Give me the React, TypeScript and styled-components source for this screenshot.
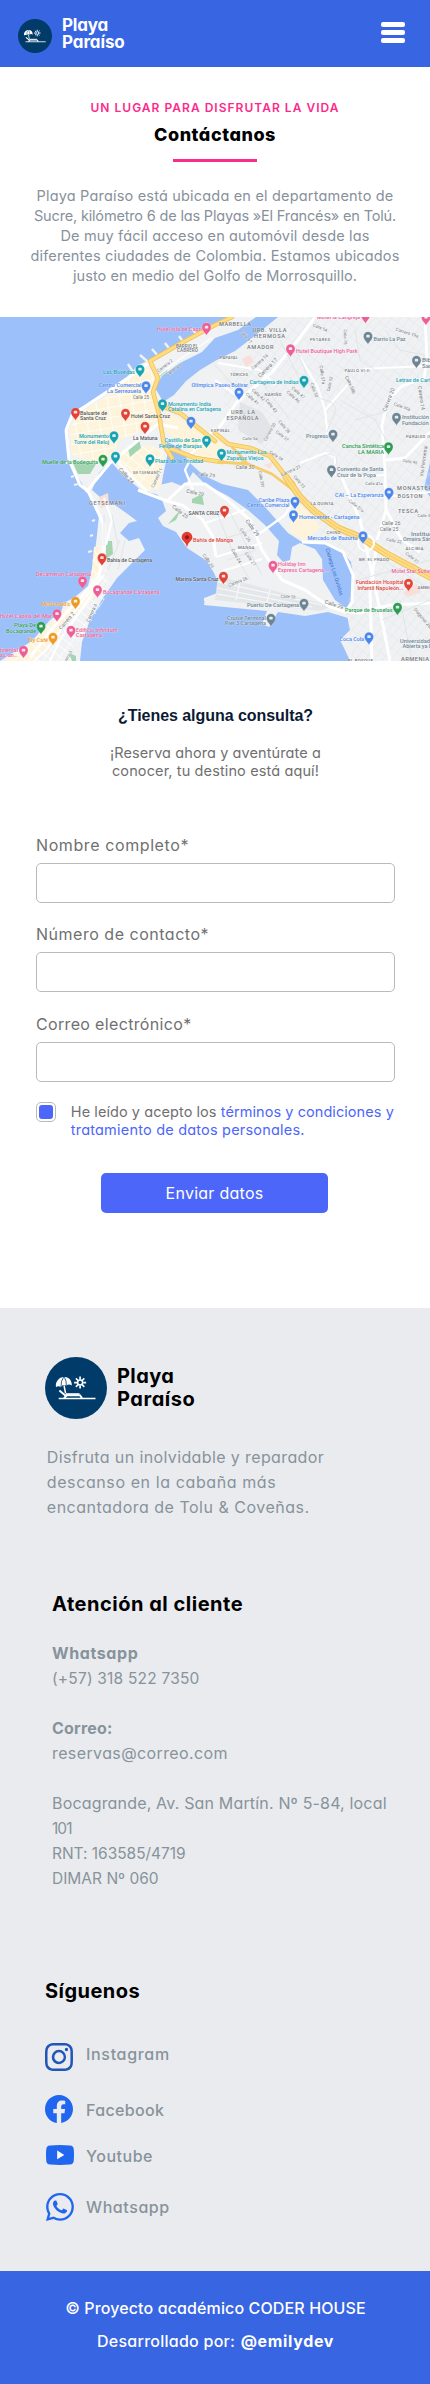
import React from "react";
import styled, { createGlobalStyle } from "styled-components";
import { BsFacebook, BsInstagram, BsWhatsapp } from "react-icons/bs";

const GlobalStyle = createGlobalStyle`
  * { box-sizing: border-box; }
  body {
    margin: 0;
    background: #fff;
    font-family: Inter, "Open Sans", sans-serif;
    font-feature-settings: "cv11";
  }
  h1, h2, h3, p, address { margin: 0; font-style: normal; }
`;

const Page = styled.div`
  width: 430px;
  height: 2384px;
  display: flex;
  flex-direction: column;
  overflow: hidden;
`;

/* One line of copy with its own tracking */
const Line = styled.span<{ $ls?: number; $w?: number; $size?: number }>`
  display: block;
  white-space: nowrap;
  letter-spacing: ${(p) => p.$ls ?? 0}px;
  ${(p) => (p.$w ? `font-weight: ${p.$w};` : "")}
  ${(p) => (p.$size ? `font-size: ${p.$size}px;` : "")}
`;

/* ---------- Header ---------- */
const Header = styled.header`
  height: 67px;
  background: #3865e2;
  display: flex;
  justify-content: space-between;
  align-items: flex-start;
  padding: 0 25px 0 18px;
`;
const HeaderBrand = styled.div`
  display: flex;
  align-items: flex-start;
  gap: 10px;
  padding-top: 17px;
  svg { margin-top: 2px; }
`;
const HeaderName = styled.div`
  color: #fff;
  font-size: 17px;
  line-height: 17px;
  font-weight: 700;
`;
const Burger = styled.button`
  margin: 22px 0 0;
  padding: 0;
  border: 0;
  background: none;
  width: 24px;
  display: flex;
  flex-direction: column;
  gap: 3px;
`;
const BurgerBar = styled.i`
  height: 5px;
  width: 24px;
  border-radius: 2px;
  background: #fff;
`;

/* ---------- Intro ---------- */
const Intro = styled.section`
  height: 250px;
  padding-top: 33px;
  display: flex;
  flex-direction: column;
  align-items: center;
  text-align: center;
`;
const Kicker = styled.div`
  color: #fc2a8b;
  font-size: 12px;
  line-height: 16px;
  font-weight: 600;
`;
const Title = styled.h1`
  margin-top: 6.5px;
  color: #000;
  font-size: 18px;
  line-height: 24px;
  font-weight: 800;
`;
const Rule = styled.div`
  width: 83.5px;
  height: 3px;
  margin-top: 12.5px;
  background: #fc2a8b;
`;
const IntroText = styled.p`
  margin-top: 24px;
  color: #87919b;
  font-size: 14.5px;
  line-height: 20px;
`;

const MapFrame = styled.section`
  height: 344px;
  svg { display: block; }
  text { font-family: Roboto, sans-serif; }
`;

/* ---------- Form ---------- */
const FormSection = styled.section`
  height: 647px;
  padding: 45px 35px 0 36px;
  display: flex;
  flex-direction: column;
`;
const FormTitle = styled.h2`
  text-align: center;
  color: #0b1a33;
  font-family: "Liberation Sans", Arial, sans-serif;
  font-size: 16px;
  line-height: 20px;
  font-weight: 700;
`;
const FormLead = styled.p`
  margin-top: 18px;
  text-align: center;
  color: #707070;
  font-size: 14.5px;
  line-height: 18px;
`;
const Form = styled.form`
  margin-top: 55px;
  display: flex;
  flex-direction: column;
  gap: 21.4px;
`;
const Field = styled.label`
  display: block;
  height: 68px;
  color: #707070;
  font-size: 16px;
  line-height: 20px;
`;
const Input = styled.input`
  display: block;
  width: 359px;
  height: 40px;
  margin-top: 8px;
  border: 1px solid #bababa;
  border-radius: 5px;
  background: #fff;
  outline: none;
`;
const Terms = styled.div`
  margin-top: -1.2px;
  display: flex;
  gap: 14.8px;
  color: #707070;
  font-size: 14.5px;
  line-height: 18px;
`;
const CheckBox = styled.div`
  width: 20px;
  height: 20px;
  border: 1px solid #bababa;
  border-radius: 5px;
  padding: 2px;
`;
const CheckFill = styled.div`
  width: 14px;
  height: 14px;
  border-radius: 3px;
  background: #4d66fa;
`;
const TermsText = styled.div`
  padding-top: 1px;
`;
const Link = styled.a`
  color: #4d66fa;
`;
const Submit = styled.button`
  align-self: flex-start;
  margin: 12.6px 0 0 65px;
  width: 227px;
  height: 40px;
  border: 0;
  border-radius: 5px;
  background: #4d66fa;
  color: #fff;
  font: 400 16px/20px Inter, sans-serif;
  font-feature-settings: "cv11";
`;

/* ---------- Footer ---------- */
const Footer = styled.footer`
  height: 963px;
  background: #eaebef;
  padding: 49px 0 0 45px;
  color: #87939b;
  font-size: 16px;
  line-height: 25px;
`;
const FooterBrand = styled.div`
  display: flex;
  align-items: center;
  gap: 10px;
  color: #000;
  font-size: 20px;
  line-height: 23px;
  font-weight: 700;
`;
const FooterText = styled.p`
  margin: 25.7px 0 0 1.8px;
`;
const FooterTitle = styled.h3<{ $top: number; $left?: number }>`
  margin: ${(p) => p.$top}px 0 0 ${(p) => p.$left ?? 0}px;
  color: #000;
  font-size: 20px;
  line-height: 24px;
  font-weight: 700;
`;
const Contact = styled.address`
  margin: 25px 0 0 7px;
`;
const ContactGroup = styled.div`
  & + & { margin-top: 25px; }
`;
const Socials = styled.div`
  margin-top: 40px;
`;
const Social = styled.div<{ $height: number; $textTop: number; $indent?: number }>`
  height: ${(p) => p.$height}px;
  display: grid;
  grid-template-columns: 41px 1fr;
  align-items: start;
  font-weight: 500;
  line-height: 20px;
  svg { display: block; margin-left: ${(p) => p.$indent ?? 0}px; }
  span { margin-top: ${(p) => p.$textTop}px; }
`;
const Credits = styled.div`
  height: 113px;
  background: #3865e2;
  padding: 27px 0 0 1px;
  color: #fff;
  font-size: 16px;
  line-height: 20px;
  font-weight: 500;
  display: flex;
  flex-direction: column;
  align-items: center;
  gap: 13px;
`;
const CreditRow = styled.div`
  display: flex;
  gap: 5.5px;
`;

function Logo({ size }: { size: number }) {
  return (
    <svg width={size} height={size} viewBox="0 0 62 62" fill="none">
      <circle cx="31" cy="31" r="31" fill="#003b69" />
      <path d="M11 30C10 25 14 20 19 20C24 19.6 27 23.5 26.8 28.5C24.8 27 23 27 21.4 28.6C19.6 27.4 17.4 27.8 16 29.7C14.2 28.8 12.3 29 11 30Z" fill="#fff" />
      <path d="M18.6 20.2Q15.8 24 16 29.4M19.4 20.2Q21.6 24 21.4 28.4" stroke="#003b69" strokeWidth=".8" />
      <path d="M19 28.4L20.6 36.4M13.7 41.5H50.5" stroke="#fff" strokeWidth="1.5" />
      <path d="M14.4 33.6L20 38.2H35L37 41.3M21.5 38.5L19 41.3" stroke="#fff" strokeWidth="2" strokeLinejoin="round" />
      <path d="M21 37H34.5" stroke="#fff" strokeWidth="1.6" />
      <circle cx="35.1" cy="25.6" r="2.5" stroke="#fff" strokeWidth="1.5" />
      <path d="M35.1 19.6V22.6M35.1 28.6V31.6M29.1 25.6H32M38.2 25.6H41.1M30.9 21.4L33 23.5M37.2 27.7L39.3 29.8M39.3 21.4L37.2 23.5M33 27.7L30.9 29.8" stroke="#fff" strokeWidth="1.7" />
    </svg>
  );
}

function YoutubeIcon() {
  return (
    <svg width="28" height="20" viewBox="0 0 28 20">
      <path d="M4 .5Q14-.3 24 .5Q27.4.8 27.7 4Q28.3 10 27.7 16Q27.4 19.2 24 19.5Q14 20.3 4 19.5Q.6 19.2.3 16Q-.3 10 .3 4Q.6.8 4 .5Z" fill="#2166ee" />
      <path d="M11.2 5.6V14.2L18.3 9.9Z" fill="#fff" />
    </svg>
  );
}

/* ---------- Map ---------- */
const TEAL = "#17a3b3";
const PINK = "#ee5d96";
const RED = "#e24336";
const BLUE = "#4a86ee";
const GREEN = "#2b9c50";
const SLATE = "#6d8593";
const ORANGE = "#ef9a22";
const DARK = "#55585d";

/* colour, x, y of the pin head */
const pins: [string, number, number][] = [
  [PINK, 206.5, 328], [TEAL, 140, 370], [BLUE, 146, 386.5], [TEAL, 162.5, 404.5], [RED, 75.5, 413],
  [RED, 125.5, 414], [RED, 145, 427], [TEAL, 114, 436.5], [BLUE, 191, 422], [TEAL, 206.5, 441],
  [GREEN, 103, 460], [TEAL, 115.5, 457], [TEAL, 150, 459.5], [PINK, 365.5, 316], [PINK, 426, 318],
  [SLATE, 368, 337], [PINK, 290.5, 349.5], [SLATE, 416.5, 361], [TEAL, 304, 381], [BLUE, 239, 393],
  [SLATE, 396.5, 418], [SLATE, 333, 435], [GREEN, 388.5, 447.5], [TEAL, 221.5, 454], [SLATE, 331.5, 470.5],
  [RED, 102, 558.5], [PINK, 82.5, 581.5], [PINK, 97.5, 590.5], [ORANGE, 75.5, 602], [PINK, 57, 614.5],
  [GREEN, 41, 627], [PINK, 71, 631], [ORANGE, 53, 638], [PINK, 23.5, 651], [BLUE, 389, 493],
  [BLUE, 295, 502], [BLUE, 293.5, 515.5], [RED, 224.5, 511], [BLUE, 363, 536.5], [PINK, 273, 566],
  [RED, 223.5, 577], [RED, 408.5, 584], [SLATE, 304, 604], [GREEN, 397.5, 608], [SLATE, 271, 619],
  [BLUE, 369, 637.5],
];

/* text, x, baseline, width, colour */
const places: [string, number, number, number, string][] = [
  ["Hotel Isla de Capri", 157, 331, 45, PINK], ["Las Bóvedas", 103, 373.5, 32, TEAL],
  ["Centro Comercial", 98.5, 387, 43, BLUE], ["La Serrezuela", 107, 392.5, 34, BLUE],
  ["Monumento India", 168, 405.5, 43, TEAL], ["Catalina en Cartagena", 168, 411, 53, TEAL],
  ["Olímpica", 191.5, 386.5, 22, BLUE],
  ["Baluarte de", 80, 414.5, 27, DARK], ["Santa Cruz", 80, 420, 26, DARK],
  ["Hotel Santa Cruz", 131, 418, 39, DARK], ["La Matuna", 133, 439.5, 24.5, DARK],
  ["Monumento", 79, 438, 30, TEAL], ["Torre del Reloj", 74, 443.5, 35, TEAL],
  ["Castillo de San", 164.5, 442, 36, TEAL], ["Felipe de Barajas", 159, 448, 43, TEAL],
  ["Muelle de la Bodeguita", 42, 463.5, 56, GREEN], ["Plaza de la Trinidad", 155, 462.5, 48, TEAL],
  ["Motel la Cangreja", 317, 319, 43, PINK], ["Barrio La Paz", 373.5, 340.5, 32, SLATE],
  ["Hotel Boutique High Park", 296, 352.5, 61.5, PINK], ["Biblioteca", 422, 362, 28, SLATE], ["Santa Rita", 422, 367.5, 28, SLATE],
  ["Cartagena de Indias", 249.5, 384, 49, TEAL], ["Paseo Bolívar", 215, 386.5, 33, BLUE],
  ["Letras de Cartagena", 396, 382, 50, TEAL], ["Institución Edu", 402, 419, 38, SLATE], ["Fundación Ped", 402, 424.5, 38, SLATE],
  ["Progreso", 306, 438, 22.5, SLATE], ["Cancha Sintética", 342, 448, 42, GREEN], ["LA MARIA", 358, 453.5, 26, GREEN],
  ["Monumento Los", 226.5, 454, 40, TEAL], ["Zapatos Viejos", 226.5, 459.5, 37, TEAL],
  ["Convento de Santa", 337, 471, 46.5, SLATE], ["Cruz de la Popa", 337, 476.5, 39, SLATE],
  ["Bahía de Manga", 193, 541.5, 40, RED], ["Marina Santa Cruz", 175.5, 580.5, 43, DARK], ["SANTA CRUZ", 188.5, 514.5, 31, DARK],
  ["Bahía de Cartagena", 107, 562, 45, DARK], ["Decameron Cartagena", 36, 576, 55, PINK],
  ["Bocagrande Cartagena", 103, 593.5, 56.5, PINK], ["McDonald's", 41.5, 605.5, 28.5, ORANGE],
  ["Hotel Capilla del Mar", 0, 617.5, 52, PINK], ["Playa De", 14, 627, 22, GREEN], ["Bocagrande", 6, 632.5, 30, GREEN],
  ["Ely Café", 28, 641.5, 20, ORANGE], ["Edificio Infinitum", 76, 631.5, 41.5, PINK], ["Cartagena", 76, 637, 26, PINK],
  ["tinental", 0, 651.5, 18, PINK], ["as, an...", 0, 657, 18, PINK],
  ["CAI – La Esperanza", 335, 496.5, 48.5, BLUE], ["Caribe Plaza", 258.5, 501.5, 31, BLUE], ["Centro Comercial", 247, 507, 42.5, BLUE],
  ["Homecenter - Cartagena", 299, 518.5, 60.5, BLUE], ["Mercado de Bazurto", 307.5, 540, 50, BLUE],
  ["Institución", 411, 536, 30, SLATE], ["Omaira Sánchez", 403, 541, 40, SLATE],
  ["Holiday Inn", 278, 566, 27.5, PINK], ["Express Cartagena...", 278, 571.5, 50.5, PINK],
  ["Motel Star Suites", 391.5, 572.5, 41, PINK], ["Fundación Hospital", 356, 584, 47.5, RED], ["Infantil Napoleón...", 357.5, 589.5, 46, RED],
  ["Puerto De Cartagena", 247, 606.5, 52, SLATE], ["Parque de Bruselas", 345, 611.5, 47.5, GREEN],
  ["Cruise Terminal", 227, 619.5, 39, SLATE], ["Pier 3 Cartagena", 225, 625, 41, SLATE],
  ["Coca Cola", 339.5, 640.5, 24.5, BLUE], ["Universidad", 400, 642.5, 30, SLATE], ["Abierta ya Dist", 402.5, 648, 36, SLATE],
];

/* text, x, baseline, width, size */
const districts: [string, number, number, number, number][] = [
  ["BARRIO EL", 176, 347.5, 22, 4.6], ["CABRERO", 177, 352, 21, 4.6], ["MARBELLA", 219, 326, 32, 5.6],
  ["URB. VILLA", 252.5, 332, 34, 5.6], ["HERMOSA", 254, 338, 31, 5.6], ["AMADOR", 247, 348.5, 26.5, 5.6],
  ["PAPAYAL", 220, 359, 18, 4.2], ["TORICES", 230, 375.5, 18, 4.2], ["PETARES", 310, 340.5, 20, 4.2],
  ["PAULO VI-II", 344.5, 371.5, 25, 4.4], ["NARIÑO", 264.5, 396, 17, 4.2], ["URB. LA", 231, 414, 24, 5.6],
  ["ESPAÑOLA", 226.5, 420, 32, 5.6], ["ESPINAL", 211, 431.5, 19, 4.4], ["PARAISO II", 406, 438, 24, 4.2],
  ["GETSEMANÍ", 133, 474, 25, 4], ["GETSEMANI", 89, 505, 36, 5.6], ["MONASTERIO", 397, 489.5, 42, 5.6],
  ["BOSTON", 397.5, 497.5, 25, 5.6], ["TESCA", 398, 513, 20, 5.6], ["LA QUINTA", 310.5, 505, 23, 4.4],
  ["CHINO", 326.5, 533.5, 14, 4.2], ["MANGA", 238, 549, 16.5, 4.4], ["ALCIBIA", 405.5, 550, 18, 4.4],
  ["BR. EL PRADO", 359, 561, 30, 4.4], ["AMBERES", 417.5, 589, 20, 4.2], ["ARMENIA", 401, 661, 28, 5.8],
  ["EL BOSQUE", 348, 662.5, 25, 4.6],
];

/* text, centre x, centre y, angle, size */
const streets: [string, number, number, number, number][] = [
  ["Carrera 2", 165, 366, -38, 4.5], ["Carrera 3", 174, 370, -35, 4.5], ["Calle 25", 141, 397.5, 0, 4.5],
  ["Calle 24", 126, 476, 48, 5.5], ["Carrera 11", 157, 478, -65, 4.5], ["Calle 29", 206, 475, 8, 5],
  ["Calle 67", 246, 337, 50, 4.2], ["Carrera 16", 260, 362, -42, 4.6], ["Carrera 17", 268, 368, -45, 5.4],
  ["Calle 54", 320, 328, 22, 4.2], ["Calle 78", 345, 337, 88, 4.2], ["Carrera 19a", 407, 333, 18, 4.6],
  ["Calle 51a", 322, 375, 82, 4.6], ["Calle 52", 330, 384, -78, 4.2], ["Calle 50", 314, 390, 70, 4.2],
  ["Calle 58b", 350, 385, 65, 4.6], ["Calle 47", 298, 393, 42, 4.4], ["Calle 46", 293, 397, 42, 4.4],
  ["Calle 42", 258, 395, 42, 4.4], ["Calle 41", 252, 399, 42, 4.4], ["Calle 43", 271, 406, 52, 4.4],
  ["Carrera 20", 389, 400, -68, 5.4], ["Carrera 14", 421, 398, 82, 5.2], ["Calle 50a", 402, 407, 20, 4.2],
  ["Carrera 20", 270, 432, -60, 4.4], ["Calle 38", 284, 427, 50, 4.4], ["Calle 37", 282, 436, 38, 4.2],
  ["Calle 3a", 250, 439, 0, 4.2], ["Calle 34", 276, 456, 32, 4.2], ["Calle 30", 245, 468, 0, 5.2],
  ["Carrera 21", 291, 471, -25, 4.6], ["Calle 33", 299, 482, 50, 4.2], ["Calle 29f", 261, 479, 80, 4.2],
  ["Calle 45", 410, 462, 10, 4.2], ["Calle 41a", 374, 484, 0, 4.2], ["Via Perimetral", 424, 461, -82, 5],
  ["Calle 29", 195, 493, 12, 5], ["Calle 25", 180, 512, 38, 5.2], ["Calle 24", 208, 561, 55, 4.6],
  ["Carrera 2", 67, 621, -50, 5.2], ["Carrera 4", 92, 613, -65, 4.8], ["Carrera 3", 67, 659, -60, 4.4],
  ["Calle 29", 252, 528, 55, 5.4], ["Calle 26", 245, 535, 55, 4.4], ["Calle 27", 250, 559, 55, 4.4],
  ["Calle 24", 236, 556, 60, 4.4], ["Carrera 26", 238, 582, -22, 4.4], ["Calle 28", 288, 597, 3, 4.2],
  ["Calle 29", 334, 605, 18, 5.4], ["Calle 27a", 356, 506, 38, 4.4], ["Calle 26", 391, 524, 0, 5.2],
  ["Calle 25", 389, 530, 0, 5.2], ["Calle 22", 394, 541, 10, 4.4], ["Calle 21", 412, 558, 38, 4.4],
  ["Calle 31", 425, 516, 0, 4.2], ["Diagonal 26a", 423, 619, 50, 4.6],
];

const MAINLAND =
  "M430 317H278L252 338L235 351L215 361L200 370L186 381L174 395L163 402L163 440L180 448L190 463L203 475L222 484L248 490L265 507L288 533L302 542L325 543L340 549L351 562L354 580L352 600L346 610L348 620L350 630L340 640L345 650L350 661H430V497L424 488L430 463Z";
const OLD_TOWN =
  "M240 317H228L187 339L150 360L138 365L128 376L100 396L72 413L65 429L67 450L75 473L88 493L99 515L97 535L94 560L88 586L75 597L64 603L61 612L50 620L32 641L16 651L0 661H80L82 642L90 620L103 598L117 578L133 562L145 550L139 538L129 541L120 533L129 523L137 521L129 515L115 505L100 497L92 490L99 473L113 458L119 452L112 463L122 474L142 491L160 495L163 476L168 452L165 432L178 425L166 421L161 398L155 388L162 376L180 363L202 352L215 338L238 330L256 317Z";
const MANGA =
  "M138 490L154 491L162 500L166 511L158 518L163 526L176 532L187 548L207 561L214 573L218 582L217 593L205 598L204 605L267 611L262 624L269 627L278 612L305 616L328 612L348 618L346 608L335 600L323 580L322 559L315 549L300 543L292 547L290 560L283 562L277 555L279 541L265 525L248 510L228 496L205 484L193 472L184 487L172 482Z";

function Pin({ color, x, y }: { color: string; x: number; y: number }) {
  return (
    <g transform={`translate(${x} ${y})`}>
      <path d="M0 7.6C-.8 4.7-4.5 3.2-4.5-.8A4.5 4.5 0 0 1 4.5-.8C4.5 3.2 .8 4.7 0 7.6Z" fill={color} stroke="#fff" strokeOpacity=".45" strokeWidth=".4" />
      <rect x="-1.7" y="-2.2" width="3.4" height="2.8" rx=".7" fill="#fff" opacity=".85" />
    </g>
  );
}

function CityMap() {
  return (
    <svg width="430" height="344" viewBox="0 317 430 344">
      <defs>
        <pattern id="blocksA" width="11" height="8" patternUnits="userSpaceOnUse" patternTransform="rotate(38)">
          <path d="M0 0H11M0 0V8" stroke="#fff" strokeWidth="1.3" fill="none" />
        </pattern>
        <pattern id="blocksB" width="10" height="7" patternUnits="userSpaceOnUse" patternTransform="rotate(-52)">
          <path d="M0 0H10M0 0V7" stroke="#e2e5e9" strokeWidth=".8" fill="none" />
        </pattern>
        <pattern id="blocksC" width="12" height="10" patternUnits="userSpaceOnUse" patternTransform="rotate(-10)">
          <path d="M0 0H12M0 0V10" stroke="#fff" strokeWidth="1.6" fill="none" />
        </pattern>
      </defs>
      <rect y="317" width="430" height="344" fill="#9cc0f9" />
      <path d={MAINLAND} fill="#eff1f3" />
      <path d={MANGA} fill="#eff1f3" />
      <path d={OLD_TOWN} fill="#f1f2f4" />
      <path d="M204 598L217 594V601H204Z" fill="#eff1f3" />

      <path d="M290 317H430V430L345 475L300 470L225 430L222 380Z" fill="url(#blocksB)" />
      <path d="M300 480L345 480L430 440V661H352L346 610L354 580L340 549L300 520Z" fill="url(#blocksB)" />
      <path d="M240 402L262 412L272 428L262 444L238 430Z" fill="#e2e4e7" />
      <path d="M218 576L332 606L320 611L215 600Z" fill="#e4e7ea" />
      <path d="M218 582L322 605M217 588L312 607M217 594L300 608M240 582L236 600M270 590L266 606" stroke="#f6f7f8" strokeWidth="1.2" />

      <g fill="#fdf4db">
        <path d="M128 377L148 366L155 378L151 390L158 412L160 425L145 430L120 440L112 455L97 462L72 455L70 428L77 414L104 398Z" />
        <path d="M118 453L150 445L163 452L160 488L146 491L117 465Z" />
        <path d="M166 412L200 428L215 445V462L195 455L166 432Z" />
        <path d="M94 547L101 545L103 570L96 577L103 590L80 610L58 634L34 661H4L26 647L62 612L76 598L90 590Z" />
        <path d="M291 511L300 503L321 527L305 541L290 532Z" />
        <path d="M215 428L225 450L217 462L213 450Z" />
      </g>
      <path d="M128 377L148 366L155 378L151 390L158 412L160 425L145 430L120 440L112 455L97 462L72 455L70 428L77 414L104 398Z" fill="url(#blocksC)" />
      <path d="M118 453L150 445L163 452L160 488L146 491L117 465Z" fill="url(#blocksA)" />
      <path d="M94 547L103 545L110 590L80 640L62 661H4L26 647L62 612L90 590Z" fill="url(#blocksA)" />

      <g fill="#a3d6b0">
        <path d="M72 461L96 464L90 474L78 474Z" />
        <path d="M128 449L139 439L141 448L130 457Z" />
        <path d="M106 541L112 541L113 554L106 559Z" />
        <path d="M168 524L181 509L176 520Z" />
        <path d="M192 499L202 494L204 505L192 503Z" />
        <path d="M69 653L76 656V661H72Z" />
        <path d="M157 374L168 368L167 372L160 377Z" opacity=".6" />
        <path d="M240 459L246 460L243 467Z" opacity=".6" />
      </g>
      <g fill="#f9ded9">
        <path d="M99 497L108 493L109 505L101 508Z" />
        <path d="M242 359L250 355L254 362L246 367Z" />
        <path d="M403 592L417 584L421 592L408 597Z" />
        <path d="M264 465L273 462L270 469Z" />
      </g>

      {/* breakwaters along the beach */}
      <path d="M140 355L148 362M152 349L159 357M165 343L171 351M179 336L184 343M192 329L198 336M206 323L211 330M128 364L133 372" stroke="#f1f2f4" strokeWidth="2.4" />
      <path d="M74 476L71 477M78 484L74 485M93 535L90 536M95 520L92 521M92 551L88 552M68 463L64 463" stroke="#f1f2f4" strokeWidth="2" />

      {/* minor roads */}
      <g stroke="#fff" fill="none" strokeWidth="2.2" strokeLinejoin="round">
        <path d="M66 430L69 460L80 485L88 491L97 510L104 525V548L99 576L82 596L55 625L30 657M150 362L128 378L72 415L66 430" strokeWidth="3" />
        <path d="M104 575L86 596L46 650L34 661M98 585L60 640L50 661M104 498L112 520L106 545" />
        <path d="M86 492L110 463L135 443L158 424L178 428M112 455L135 480L147 491M160 425L165 450" strokeWidth="3" />
        <path d="M315 317L298 340L272 372L237 402L219 428" strokeWidth="3" />
        <path d="M215 380L240 398M218 363L260 370L275 385M300 357L318 388L325 410L328 438M325 410L352 380M344 371L380 368L430 366" />
        <path d="M425 317L427 360L424 378L402 386L388 400L382 425L385 470L386 510L377 540M386 460L405 458L430 432" strokeWidth="2.8" />
        <path d="M300 463L325 453L335 457V475M345 477L386 475M350 495L386 497L430 492" />
        <path d="M342 478L360 520L369 560L380 610L390 661M376 550L370 590L372 661M386 510L402 540L420 552" strokeWidth="3" />
        <path d="M138 490L167 501L182 505L202 519L213 537L216 557M167 501L185 484L205 484L225 498L250 520L262 550L282 580L305 590L330 607L346 612" strokeWidth="3" />
        <path d="M190 455L207 437L215 428M193 490L185 470L190 460M205 523L245 510M216 557L262 543M222 571L262 559M259 534L285 515L294 500" />
        <path d="M302 542L325 543L343 552L353 575L352 602L346 611L360 613L390 605L430 603" strokeWidth="3" />
        <path d="M155 378L180 359L212 338" strokeWidth="1.2" />
      </g>
      <g stroke="#dfe3e7" strokeWidth=".9" fill="none">
        <path d="M295 350C310 370 305 395 325 400S330 420 327 432M355 330L360 360L378 372M260 380L290 420M340 400L375 420L386 440M318 462C325 448 345 456 333 468M280 340L300 380M215 365L236 388M385 330L400 350L424 355M355 420L385 412" />
        <path d="M104 515V545M112 515L118 545M120 540L108 570M125 540L118 570M384 560L430 590M382 620L430 600M400 600L412 661M358 580L430 560" />
        <path d="M228 508L246 545L262 575M218 515L232 550L250 580M220 540L252 530M228 560L256 550" />
      </g>

      {/* highways */}
      <g fill="none" strokeLinejoin="round" strokeLinecap="round">
        <path d="M232 317L215 325L185 341L150 361L158 378L153 392L159 414L164 445L172 458M159 405L180 413L215 441M164 446L195 458L222 462M215 433L228 444L250 448L270 456L284 474L293 484" stroke="#f5c04e" strokeWidth="4.6" />
        <path d="M232 317L215 325L185 341L150 361L158 378L153 392L159 414L164 445L172 458M159 405L180 413L215 441M164 446L195 458L222 462M215 433L228 444L250 448L270 456L284 474L293 484" stroke="#fddc86" strokeWidth="3" />
        <path d="M219 462L248 464L272 474L293 490M232 447L246 462" stroke="#f8cc66" strokeWidth="2.8" />
        <path d="M286 477L300 497L314 511L338 528L362 538L385 553L430 577" stroke="#f5c04e" strokeWidth="7" />
        <path d="M286 477L300 497L314 511L338 528L362 538L385 553L430 577" stroke="#fddc86" strokeWidth="5" />
        <path d="M286 477L300 497L314 511L338 528L362 538L385 553L430 577" stroke="#f6c95f" strokeWidth="1" />
        <circle cx="366" cy="543" r="8" stroke="#fff" strokeWidth="2" />
      </g>

      {streets.map(([t, x, y, a, s], i) => (
        <text key={i} x={x} y={y} transform={`rotate(${a} ${x} ${y})`} textAnchor="middle" dominantBaseline="middle" fontSize={s} fill="#70757a" stroke="#fff" strokeOpacity=".6" strokeWidth=".7" paintOrder="stroke">{t}</text>
      ))}
      <text x="334" y="572" transform="rotate(73 334 572)" textAnchor="middle" dominantBaseline="middle" fontSize="5.4" fill="#3f74cc">Ciénega Las Quintas</text>
      {districts.map(([t, x, y, w, s], i) => (
        <text key={i} x={x} y={y} textLength={w} lengthAdjust="spacing" fontSize={s} fontWeight="500" fill="#74787d" stroke="#fff" strokeOpacity=".6" strokeWidth=".7" paintOrder="stroke">{t}</text>
      ))}
      {pins.map(([color, x, y], i) => (
        <Pin key={i} color={color} x={x} y={y} />
      ))}
      <path d="M187 547.5C186 541 181.6 541 181.6 537.2A5.4 5.4 0 0 1 192.4 537.2C192.4 541 188 541 187 547.5Z" fill="#e53a2f" />
      <circle cx="187" cy="537.2" r="2" fill="#8f1a16" />
      {places.map(([t, x, y, w, c], i) => (
        <text key={i} x={x} y={y} textLength={w} lengthAdjust="spacingAndGlyphs" fontSize="6" fontWeight="500" fill={c} stroke="#fff" strokeOpacity=".55" strokeWidth=".7" paintOrder="stroke">{t}</text>
      ))}
    </svg>
  );
}

export default function App() {
  return (
    <Page>
      <GlobalStyle />
      <Header>
        <HeaderBrand>
          <Logo size={34} />
          <HeaderName>
            <Line $ls={-0.2}>Playa</Line>
            <Line $ls={-0.1}>Paraíso</Line>
          </HeaderName>
        </HeaderBrand>
        <Burger aria-label="Menú">
          <BurgerBar />
          <BurgerBar />
          <BurgerBar />
        </Burger>
      </Header>

      <Intro>
        <Kicker><Line $ls={1.02}>UN LUGAR PARA DISFRUTAR LA VIDA</Line></Kicker>
        <Title><Line $ls={0.55}>Contáctanos</Line></Title>
        <Rule />
        <IntroText>
          <Line $ls={0.187}>Playa Paraíso está ubicada en el departamento de</Line>
          <Line $ls={-0.169}>Sucre, kilómetro 6 de las Playas »El Francés» en Tolú.</Line>
          <Line $ls={0.15}>De muy fácil acceso en automóvil desde las</Line>
          <Line $ls={0.154}>diferentes ciudades de Colombia. Estamos ubicados</Line>
          <Line $ls={0.061}>justo en medio del Golfo de Morrosquillo.</Line>
        </IntroText>
      </Intro>

      <MapFrame><CityMap /></MapFrame>

      <FormSection>
        <FormTitle><Line $ls={-0.05}>¿Tienes alguna consulta?</Line></FormTitle>
        <FormLead>
          <Line $ls={0.1}>¡Reserva ahora y aventúrate a</Line>
          <Line $ls={0.12}>conocer, tu destino está aquí!</Line>
        </FormLead>
        <Form>
          <Field><Line $ls={0.594}>Nombre completo*</Line><Input /></Field>
          <Field><Line $ls={0.516}>Número de contacto*</Line><Input /></Field>
          <Field><Line $ls={0.34}>Correo electrónico*</Line><Input /></Field>
          <Terms>
            <CheckBox><CheckFill /></CheckBox>
            <TermsText>
              <Line $ls={0.067}>He leído y acepto los <Link>términos y condiciones y</Link></Line>
              <Line $ls={0.2}><Link>tratamiento de datos personales.</Link></Line>
            </TermsText>
          </Terms>
          <Submit type="button"><Line $ls={0.27}>Enviar datos</Line></Submit>
        </Form>
      </FormSection>

      <Footer>
        <FooterBrand>
          <Logo size={62} />
          <div>
            <Line $ls={0.4}>Playa</Line>
            <Line $ls={0.55}>Paraíso</Line>
          </div>
        </FooterBrand>
        <FooterText>
          <Line $ls={0.38}>Disfruta un inolvidable y reparador</Line>
          <Line $ls={0.6}>descanso en la cabaña más</Line>
          <Line $ls={0.5}>encantadora de Tolu &amp; Coveñas.</Line>
        </FooterText>
        <FooterTitle $top={72} $left={7}><Line $ls={0.52}>Atención al cliente</Line></FooterTitle>
        <Contact>
          <ContactGroup>
            <Line $ls={0.6} $w={700}>Whatsapp</Line>
            <Line $ls={0.2} $size={15.5}>(+57) 318 522 7350</Line>
          </ContactGroup>
          <ContactGroup>
            <Line $ls={0.2} $w={700}>Correo:</Line>
            <Line $ls={0.39}>reservas@correo.com</Line>
          </ContactGroup>
          <ContactGroup>
            <Line $ls={0.17}>Bocagrande, Av. San Martín. Nº 5-84, local</Line>
            <Line $ls={-0.96} $size={15.5}>101</Line>
            <Line $ls={-0.03} $size={15.5}>RNT: 163585/4719</Line>
            <Line $ls={0} $size={15.5}>DIMAR Nº 060</Line>
          </ContactGroup>
        </Contact>
        <FooterTitle $top={88}><Line $ls={0.47}>Síguenos</Line></FooterTitle>
        <Socials>
          <Social $height={52} $textTop={1.5}>
            <BsInstagram size={28} color="#1f56b8" />
            <Line $ls={0.68}>Instagram</Line>
          </Social>
          <Social $height={50.5} $textTop={5.5}>
            <BsFacebook size={28} color="#2166ee" />
            <Line $ls={0.33}>Facebook</Line>
          </Social>
          <Social $height={48} $textTop={1} $indent={1}>
            <YoutubeIcon />
            <Line $ls={0.51}>Youtube</Line>
          </Social>
          <Social $height={28} $textTop={4} $indent={1}>
            <BsWhatsapp size={28} color="#2166ee" />
            <Line $ls={0.58}>Whatsapp</Line>
          </Social>
        </Socials>
      </Footer>

      <Credits>
        <Line $ls={0.12}>© Proyecto académico CODER HOUSE</Line>
        <CreditRow>
          <Line $ls={0.26}>Desarrollado por:</Line>
          <Line $ls={0.65} $w={700}>@emilydev</Line>
        </CreditRow>
      </Credits>
    </Page>
  );
}
